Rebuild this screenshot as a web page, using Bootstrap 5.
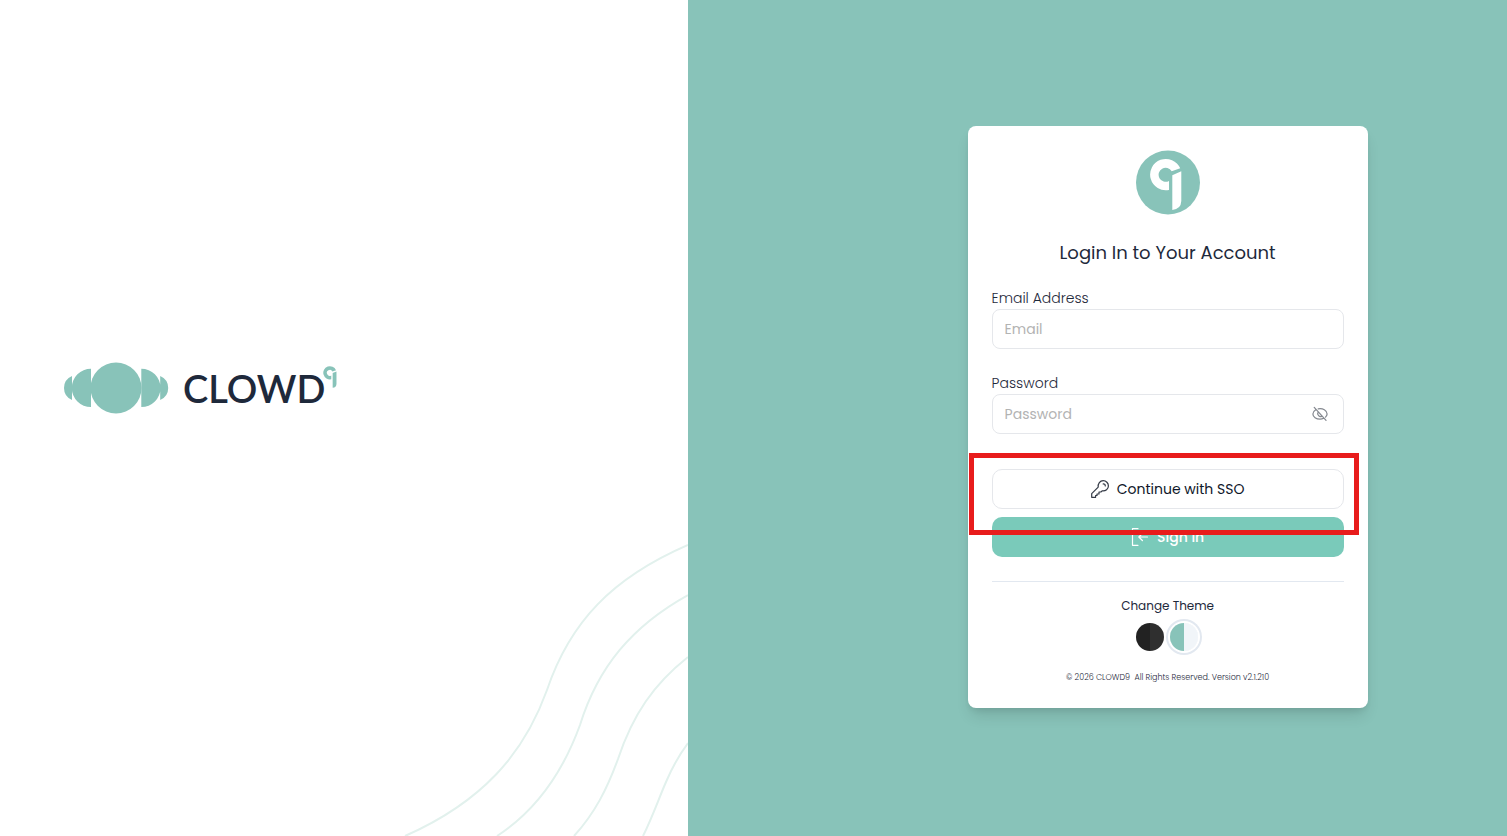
<!DOCTYPE html>
<html lang="en">
<head>
<meta charset="utf-8">
<meta name="viewport" content="width=device-width, initial-scale=1">
<title>CLOWD9 Login</title>
<link rel="stylesheet" href="https://cdn.jsdelivr.net/npm/bootstrap@5.3.0/dist/css/bootstrap.min.css">
<style>
  :root { --brand: #88c3b9; --navy: #1e293b; }
  body { font-family: Poppins, Inter, sans-serif; color: var(--navy); font-size: 14px; }
  .brand-panel { flex: 0 0 45.65%; padding: 0 64px 60px; overflow: hidden; }
  .waves { right: 0; bottom: 0; }
  .wordmark { font-family: Lato, sans-serif; font-weight: 600; font-size: 38px; line-height: 52px; margin-left: 13px; }
  .nine { margin-top: 4px; margin-left: -2px; color: var(--brand); }
  .form-panel { background: var(--brand); padding-right: 9.25%; }
  .login-card { width: 400px; border-radius: 8px; padding: 24px 24px 22px; margin-bottom: 2px;
    box-shadow: 0 10px 15px -3px rgba(0,0,0,.12), 0 4px 6px -2px rgba(0,0,0,.08); }
  .login-title { font-size: 18px; line-height: 28px; font-weight: 400; margin: 24px 0 20px; }
  .field-label { display: block; line-height: 22px; font-weight: 300; }
  .field-box { height: 40px; border: 1px solid #e5e7eb; border-radius: 8px; padding: 0 12px; font-size: 14px; }
  .field-box::placeholder { color: #b3b3b3; opacity: 1; }
  .second-field { margin-top: 23px; }
  .eye-btn { right: 16px; top: 12px; color: #858990; line-height: 0; }
  .sso-wrap { margin-top: 35px; }
  .action { height: 40px; border-radius: 10px; font-size: 14px; line-height: 20px; padding: 0; }
  .sso { border: 1px solid #e5e7eb; color: #0f172a; background: #fff; }
  .signin { background: #7acaba; color: #fff; border: 0; font-weight: 500; }
  .frame { inset: -16px -15px -26px -23px; border: 5px solid #e81c1c; pointer-events: none; }
  .rule { border-top: 1px solid #e2e8f0; margin: 24px 0 14px; opacity: 1; }
  .theme-title { font-size: 12px; line-height: 20px; }
  .swatch { width: 28px; height: 28px; border: 0; padding: 0; border-radius: 50%; }
  .dark-swatch { background: linear-gradient(90deg, #222 50%, #2f2f2f 50%); }
  .light-swatch { background: linear-gradient(90deg, var(--brand) 50%, #f1f5f9 50%); box-shadow: 0 0 0 2px #fff, 0 0 0 4px #e2e8f0; }
  .swatches { gap: 6px; margin-top: 7px; padding-right: 2px; }
  .copyright { font-size: 8px; line-height: 16px; margin: 19px 0 0; font-weight: 300; white-space: pre; }
</style>
</head>
<body>
<svg class="d-none" aria-hidden="true">
  <symbol id="nine" viewBox="14 8 32 52"><path fill="currentColor" d="M44.2 17.8A15.7 15.7 0 1 0 33 39.5V30.4A7 7 0 1 1 35.7 20.8ZM36.3 24.8L45.3 20.8V50.5Q45 58.6 36.3 59.5Z"/></symbol>
</svg>
<main class="d-flex min-vh-100">
  <section class="brand-panel position-relative d-flex align-items-center bg-white">
    <div class="d-flex align-items-start">
      <svg width="106" height="52" viewBox="0 0 106 52" fill="#88c3b9" aria-hidden="true">
        <circle cx="52" cy="26" r="25.5"/>
        <path d="M27 6.7A19.2 19.2 0 0 0 27 45.1ZM8 14Q0 17.5 0 26T8 38ZM77.3 6.7A19.2 19.2 0 0 1 77.3 45.1ZM96.2 14Q104.2 17.5 104.2 26T96.2 38Z"/>
      </svg>
      <span class="wordmark">CLOWD</span>
      <svg class="nine" width="14" height="22" role="img" aria-label="9"><use href="#nine"/></svg>
    </div>
    <svg class="waves position-absolute" width="298" height="306" viewBox="0 0 298 306" fill="none" stroke="#e2f1ed" stroke-width="2" aria-hidden="true">
      <path d="M15 306C92 272 134 224 157 160C180 92 222 48 298 15"/>
      <path d="M107 306C147 280 174 239 190 195C208 137 242 96 298 65"/>
      <path d="M184 306C205 283 217 259 228 229C243 184 264 154 298 127"/>
      <path d="M253 306C262 288 269 268 276 252C282 238 289 225 298 213"/>
    </svg>
  </section>
  <section class="form-panel flex-grow-1 d-flex align-items-center justify-content-end">
    <form class="login-card bg-white" onsubmit="return false">
      <svg class="d-block mx-auto" width="64" height="65" viewBox="0 0 64 64" role="img" aria-label="CLOWD9">
        <circle cx="32" cy="32" r="32" fill="#88c3b9"/>
        <use href="#nine" x="14" y="8" width="32" height="52" color="#fff"/>
      </svg>
      <h1 class="login-title text-center">Login In to Your Account</h1>
      <label class="field-label" for="email">Email Address</label>
      <input class="form-control field-box" type="email" id="email" placeholder="Email">
      <label class="field-label second-field" for="password">Password</label>
      <div class="position-relative">
        <input class="form-control field-box" type="password" id="password" placeholder="Password">
        <button type="button" class="eye-btn btn p-0 border-0 position-absolute" aria-label="Show password">
          <svg width="16" height="16" viewBox="0 0 18 18" fill="none" stroke="currentColor" stroke-width="1.4" stroke-linecap="round">
            <path d="M2.5 1.6L15.8 16.2M4.2 4.2C2.3 5.3 1 7 1 9C1 12.4 4.8 14.8 9 14.8C10.6 14.8 12 14.4 13.2 13.8M7 3.2C12 2.2 17 5 17 9C17 10.4 16.2 11.6 15.2 12.5M6.8 7.2C5.2 9.5 8.6 13 11 11.4"/>
          </svg>
        </button>
      </div>
      <div class="sso-wrap position-relative">
        <button type="button" class="btn action sso w-100 d-flex align-items-center justify-content-center gap-2">
          <svg width="18" height="18" viewBox="0 0 18 18" fill="none" stroke="#343a46" stroke-width="1.2" stroke-linejoin="round" stroke-linecap="round" aria-hidden="true">
            <path d="M7.2 7.2C6.7 3.6 9 .7 12.2.7C15.1.7 17.4 3 17.4 5.9C17.4 9 14.6 11.3 11.1 10.8L9.9 12H8V14H6V15.5H4.6V17.3H.7V13.7Z"/>
            <path d="M12.2 3.9C13.4 3.9 14.3 4.8 14.3 5.9"/>
          </svg>
          <span>Continue with SSO</span>
        </button>
        <div class="frame position-absolute z-1"></div>
      </div>
      <button type="submit" class="btn action signin w-100 mt-2 d-flex align-items-center justify-content-center gap-2">
        <svg width="18" height="18" viewBox="0 0 18 18" fill="none" stroke="currentColor" stroke-width="1.2" stroke-linejoin="round" stroke-linecap="round" aria-hidden="true">
          <path d="M7 .7H1.5V17.3H7M16.5 9H8M11.4 5.5L7.8 9L11.4 12.5"/>
        </svg>
        <span>Sign In</span>
      </button>
      <hr class="rule">
      <div class="theme-title text-center">Change Theme</div>
      <div class="swatches d-flex justify-content-center">
        <button type="button" class="swatch dark-swatch" aria-label="Dark theme"></button>
        <button type="button" class="swatch light-swatch" aria-label="Light theme"></button>
      </div>
      <p class="copyright text-center">© 2026 CLOWD9  All Rights Reserved. Version v2.1.210</p>
    </form>
  </section>
</main>
<script src="https://cdn.jsdelivr.net/npm/bootstrap@5.3.0/dist/js/bootstrap.bundle.min.js"></script>
</body>
</html>
